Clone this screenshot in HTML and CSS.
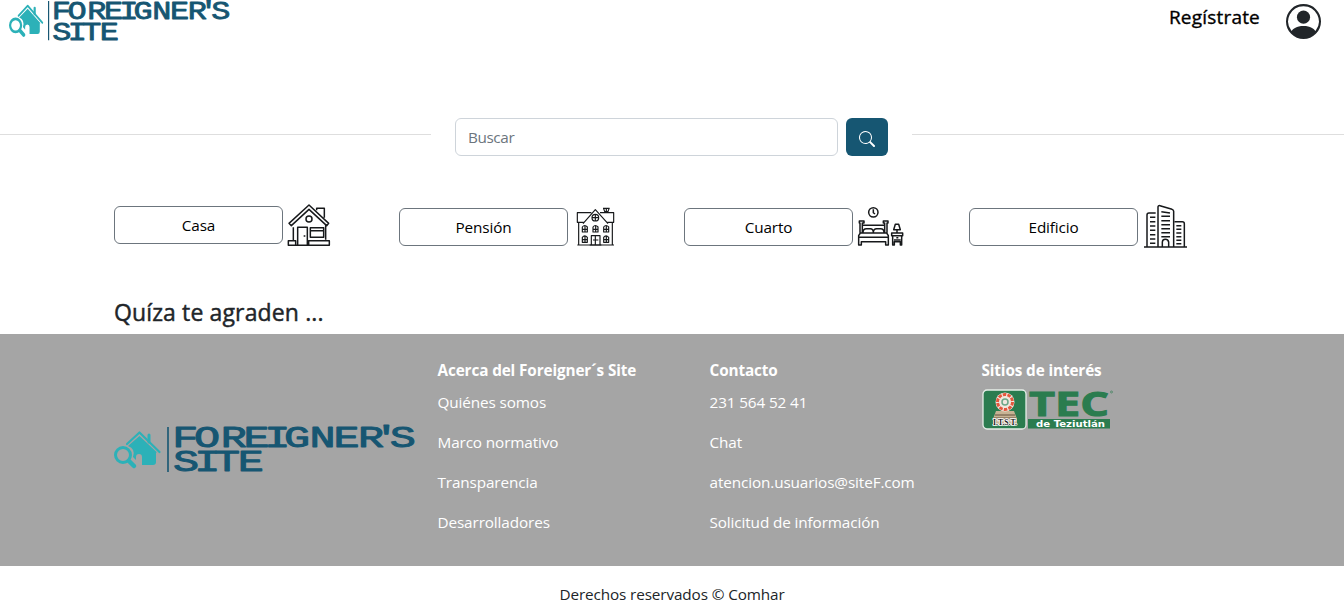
FILE: index.html
```html
<!DOCTYPE html>
<html lang="es">
<head>
<meta charset="utf-8">
<title>Foreigner's Site</title>
<link rel="stylesheet" href="styles.css">
</head>
<body>
<svg class="defs" width="0" height="0">
  <symbol id="logo" viewBox="0 0 300 46" preserveAspectRatio="none" overflow="visible">
    <g fill="none" stroke="#2cb1b8" stroke-linecap="round" stroke-linejoin="round">
      <path d="M13 22 25.500 10.500 45.500 30" transform="translate(0 -5)" stroke-width="2.200"/>
      <path d="M35 8v7" stroke-width="3"/>
      <circle cx="9" cy="28" r="7.500" stroke-width="3"/>
      <path d="m15 34 5 5" stroke-width="4.500"/>
    </g>
    <path fill="#2cb1b8" d="M25.500 9 43 25.500H42V35q0 3-3 3H28V30q0-3-3-3t-3 3v3l-3-3q3-8-5-11z"/>
    <path d="M54 0v45" stroke="#165672" stroke-width="1.600"/>
    <g class="logo-text">
      <text transform="translate(0 20.400) scale(1.500 1)" x="47.600 62 79.900 95 108.900 122 139 155.100 171.300 181.500 192.500">FOREIGNER'S</text>
      <text transform="translate(0 44.400) scale(1.500 1)" x="48 62.200 75.300 91.200">SITE</text>
    </g>
  </symbol>
</svg>

<header class="header">
  <svg class="header-logo"><use href="#logo"/></svg>
  <nav class="account">
    <a class="register">Regístrate</a>
    <svg class="avatar" viewBox="0 0 16 16" fill="#212529"><path d="M11 6a3 3 0 1 1-6 0 3 3 0 0 1 6 0"/><path fill-rule="evenodd" d="M0 8a8 8 0 1 1 16 0A8 8 0 0 1 0 8m8-7a7 7 0 0 0-5.468 11.370C3.242 11.226 4.805 10 8 10s4.757 1.225 5.468 2.370A7 7 0 0 0 8 1"/></svg>
  </nav>
</header>

<section class="search">
  <span class="rule rule-left"></span>
  <form class="search-form">
    <input class="search-input" type="text" placeholder="Buscar">
    <button class="search-button" type="button" aria-label="Buscar">
      <svg width="16" height="16" viewBox="0 0 16 16" fill="#fff"><path d="M11.742 10.344a6.500 6.500 0 1 0-1.397 1.398h-.001q.044.060.098.115l3.850 3.850a1 1 0 0 0 1.415-1.414l-3.850-3.850a1 1 0 0 0-.115-.100zM12 6.500a5.500 5.500 0 1 1-11 0 5.500 5.500 0 0 1 11 0"/></svg>
    </button>
  </form>
  <span class="rule"></span>
</section>

<main class="container">
  <div class="categories">
    <div class="category category-first">
      <button class="category-button">Casa</button>
      <svg class="icon icon-house" viewBox="21 24 132 132">
        <path d="m27 85 60-55 59 55-6 7-53-49-53 49zM110 46V40h23v28M40 97v38M53 150V97h29v53M91 98h40v29H91zM91 107h40M137 91v43M71 123h5M25 137h22v14H25zM86 137h62v14H86zM47 151h39"/>
        <circle cx="87" cy="72" r="9"/>
      </svg>
    </div>
    <div class="category">
      <button class="category-button">Pensión</button>
      <svg class="icon icon-pension" viewBox="33 33 117 120">
        <path d="M56 82H37V53h42M105 53h41v29h-19M54 86l37-42 38 42M41 83v67h101V83M114 40h20M116 41l3 9h10l3-9M124 39v13M37 150h110"/>
        <circle cx="91" cy="68" r="10"/><path d="M81 68h20M91 58v20"/>
        <path d="M52 111V96q7-9 15 0v15zM84 111V96q7-9 15 0v15zM116 111V96q7-9 15 0v15zM52 142v-15q7-9 15 0v15zM116 142v-15q7-9 15 0v15zM79 150v-28h26v28M91 123v27M60 92v19M92 92v19M124 92v19M60 122v20M124 122v20M52 103h15M84 103h15M116 103h15M52 134h15M116 134h15M84 135h16M74 150h35"/>
      </svg>
    </div>
    <div class="category">
      <button class="category-button">Cuarto</button>
      <svg class="icon icon-room" viewBox="21 33 141 120">
        <circle cx="70" cy="52" r="14"/>
        <path d="M70 43v10l5 4M30 113V84h-2v-6h14v6h-5v29M111 113V84h3v-6h-14v6h4v29M37 91h67M39 113q0-12 10-12h12q9 0 9 12 0-12 10-12h12q10 0 10 12M31 114h79l5 8v28h-8v-10H34v10h-8v-28zM26 127h89M136 88h10l5 16h-20zM141 104v9M125 114h33v8h-33zM128 122v28h5v-10h18v10h4v-28M132 135h20M139 128h6"/>
      </svg>
    </div>
    <div class="category">
      <button class="category-button">Edificio</button>
      <svg class="icon icon-building" viewBox="24 27 132 132">
        <path d="M27 156h129M36 155V60q0-6 6-6h20M69 155V36q0-5 6-4l36 11q5 2 5 6v106M119 80h23q6 0 6 6v69M82 155v-14q1-8 9-8t10 8v14M45 67h16M45 80h16M45 93h16M45 106h16M45 119h16M45 132h16M45 145h16M79 50l26 4M79 64h26M79 77h26M79 89h26M79 101h26M79 113h26M79 125h26M124 92h15M124 103h15M124 114h15M124 125h15M124 136h15M124 146h15"/>
      </svg>
    </div>
  </div>
  <h2 class="suggestions">Quíza te agraden ...</h2>
</main>

<footer class="footer">
  <svg class="footer-logo"><use href="#logo"/></svg>
  <div class="links">
    <h3 class="links-title">Acerca del Foreigner´s Site</h3>
    <a>Quiénes somos</a><a>Marco normativo</a><a>Transparencia</a><a>Desarrolladores</a>
  </div>
  <div class="links">
    <h3 class="links-title">Contacto</h3>
    <a>231 564 52 41</a><a>Chat</a><a>atencion.usuarios@siteF.com</a><a>Solicitud de información</a>
  </div>
  <div class="links">
    <h3 class="links-title">Sitios de interés</h3>
    <svg class="tec" width="132" height="42" viewBox="0 0 132 42">
      <rect x="1" y="1" width="43" height="39" rx="4" fill="#2b7c4f" stroke="#e6eee8" stroke-width="1.300"/>
      <path d="M14 22h18l3 8v6H11v-6z" fill="#c7b394"/>
      <path d="M13 26h20M12 29h22" stroke="#63503d"/>
      <circle cx="23" cy="13" r="9.500" fill="#f0e8df"/>
      <circle cx="23" cy="13" r="7.500" fill="none" stroke="#e4573d" stroke-width="3" stroke-dasharray="3.500 1.200"/>
      <circle cx="23" cy="13" r="3" fill="none" stroke="#6ba787" stroke-width="1.500"/>
      <text class="tec-seal" x="11" y="35.500" textLength="24" lengthAdjust="spacingAndGlyphs">I.T.S.T.</text>
      <text class="tec-name" x="47" y="26.800" textLength="80" lengthAdjust="spacingAndGlyphs">TEC</text>
      <rect x="46" y="30" width="82" height="9.500" fill="#2b7c4f"/>
      <text class="tec-place" x="54" y="37.800" textLength="69" lengthAdjust="spacingAndGlyphs">de Teziutlán</text>
      <circle cx="129.500" cy="3" r="1" fill="none" stroke="#2b7c4f" stroke-width=".6"/>
    </svg>
  </div>
</footer>
<p class="copyright">Derechos reservados © Comhar</p>
</body>
</html>
```

FILE: styles.css
```css
* { box-sizing: border-box; }
body {
  margin: 0;
  height: 603px;
  overflow: hidden;
  background: #fff;
  color: #212529;
  font: 15.3px/24px "Open Sans", "Noto Sans", sans-serif;
  letter-spacing: -0.12px;
}
.defs { position: absolute; }
.header {
  display: flex;
  justify-content: space-between;
  align-items: flex-start;
  height: 118px;
  padding: 1px 23px 0 9px;
}
.header-logo { width: 220px; height: 40px; overflow: visible; }
.account { display: flex; gap: 26px; }
.register {
  margin-top: 2px;
  font-size: 19px;
  line-height: 28px;
  letter-spacing: 0.2px;
  -webkit-text-stroke: 0.35px #000;
  color: #000;
}
.avatar { width: 35px; height: 35px; margin-top: 3px; }
.logo-text {
  font-family: "Liberation Mono", monospace;
  font-size: 29px;
  letter-spacing: 0;
  text-anchor: middle;
  fill: #165672;
  stroke: #165672;
  stroke-width: 0.9px;
  stroke-linejoin: round;
}
.search { display: flex; gap: 24px; height: 38px; }
.rule { flex: 1; height: 1px; margin-top: 16px; background: #dedede; }
.rule-left { flex: 0 0 431px; }
.search-form { display: flex; gap: 8px; width: 433px; }
.search-input {
  width: 383px;
  height: 38px;
  padding: 6px 12px;
  border: 1px solid #ced4da;
  border-radius: 6px;
  font: inherit;
  letter-spacing: -0.4px;
}
.search-input::placeholder { color: #6c757d; opacity: 1; }
.search-button {
  display: flex;
  align-items: center;
  justify-content: center;
  width: 42px;
  height: 38px;
  padding: 4px 0 0;
  border: 0;
  border-radius: 6px;
  background: #165672;
}
.container { height: 178px; padding: 47px 102px 0 114px; }
.categories { display: grid; grid-template-columns: repeat(4, 285px); height: 95px; }
.category { display: flex; align-items: flex-start; padding-top: 5px; }
.category-first { padding-top: 3px; }
.category-button {
  width: 169px;
  height: 38px;
  padding: 0;
  border: 1px solid #6c757d;
  border-radius: 6px;
  background: #fff;
  color: #000;
  font: inherit;
  letter-spacing: -0.15px;
}
.icon { fill: none; stroke: #17191b; stroke-width: 4.5; stroke-linejoin: round; }
.icon-house { width: 44px; height: 44px; margin: -3px 0 0 4px; }
.icon-pension { width: 39px; height: 40px; margin: -2px 0 0 8px; stroke-width: 3.5; }
.icon-room { width: 47px; height: 40px; margin: -2px 0 0 4px; }
.icon-building { width: 44px; height: 44px; margin: -4px 0 0 5px; }
.suggestions {
  margin: 0;
  font-size: 23px;
  line-height: 29px;
  font-weight: 400;
  letter-spacing: 0.13px;
  -webkit-text-stroke: 0.45px #212529;
}
.footer {
  display: grid;
  grid-template-columns: 323.5px 272px 272px 1fr;
  height: 232px;
  padding: 24px 0 0 114px;
  background: #a5a5a5;
  color: #fff;
}
.footer-logo { width: 300px; height: 46px; margin-top: 69px; overflow: visible; }
.links { display: flex; flex-direction: column; gap: 16px; }
.links-title { margin: 0 0 -8px; font-size: 15.3px; line-height: 24px; font-weight: 700; }
.tec { margin-top: -1px; letter-spacing: 0; }
.tec-seal { font: bold 8px "Liberation Serif", serif; fill: #1d1d1b; stroke: #fff; stroke-width: 1.5px; paint-order: stroke; }
.tec-name { font: bold 34px "Open Sans", sans-serif; fill: #2b7c4f; stroke: #2b7c4f; }
.tec-place { font: bold 9px "DejaVu Sans", sans-serif; fill: #fff; }
.copyright { margin: 16px 0 0; text-align: center; }
```
